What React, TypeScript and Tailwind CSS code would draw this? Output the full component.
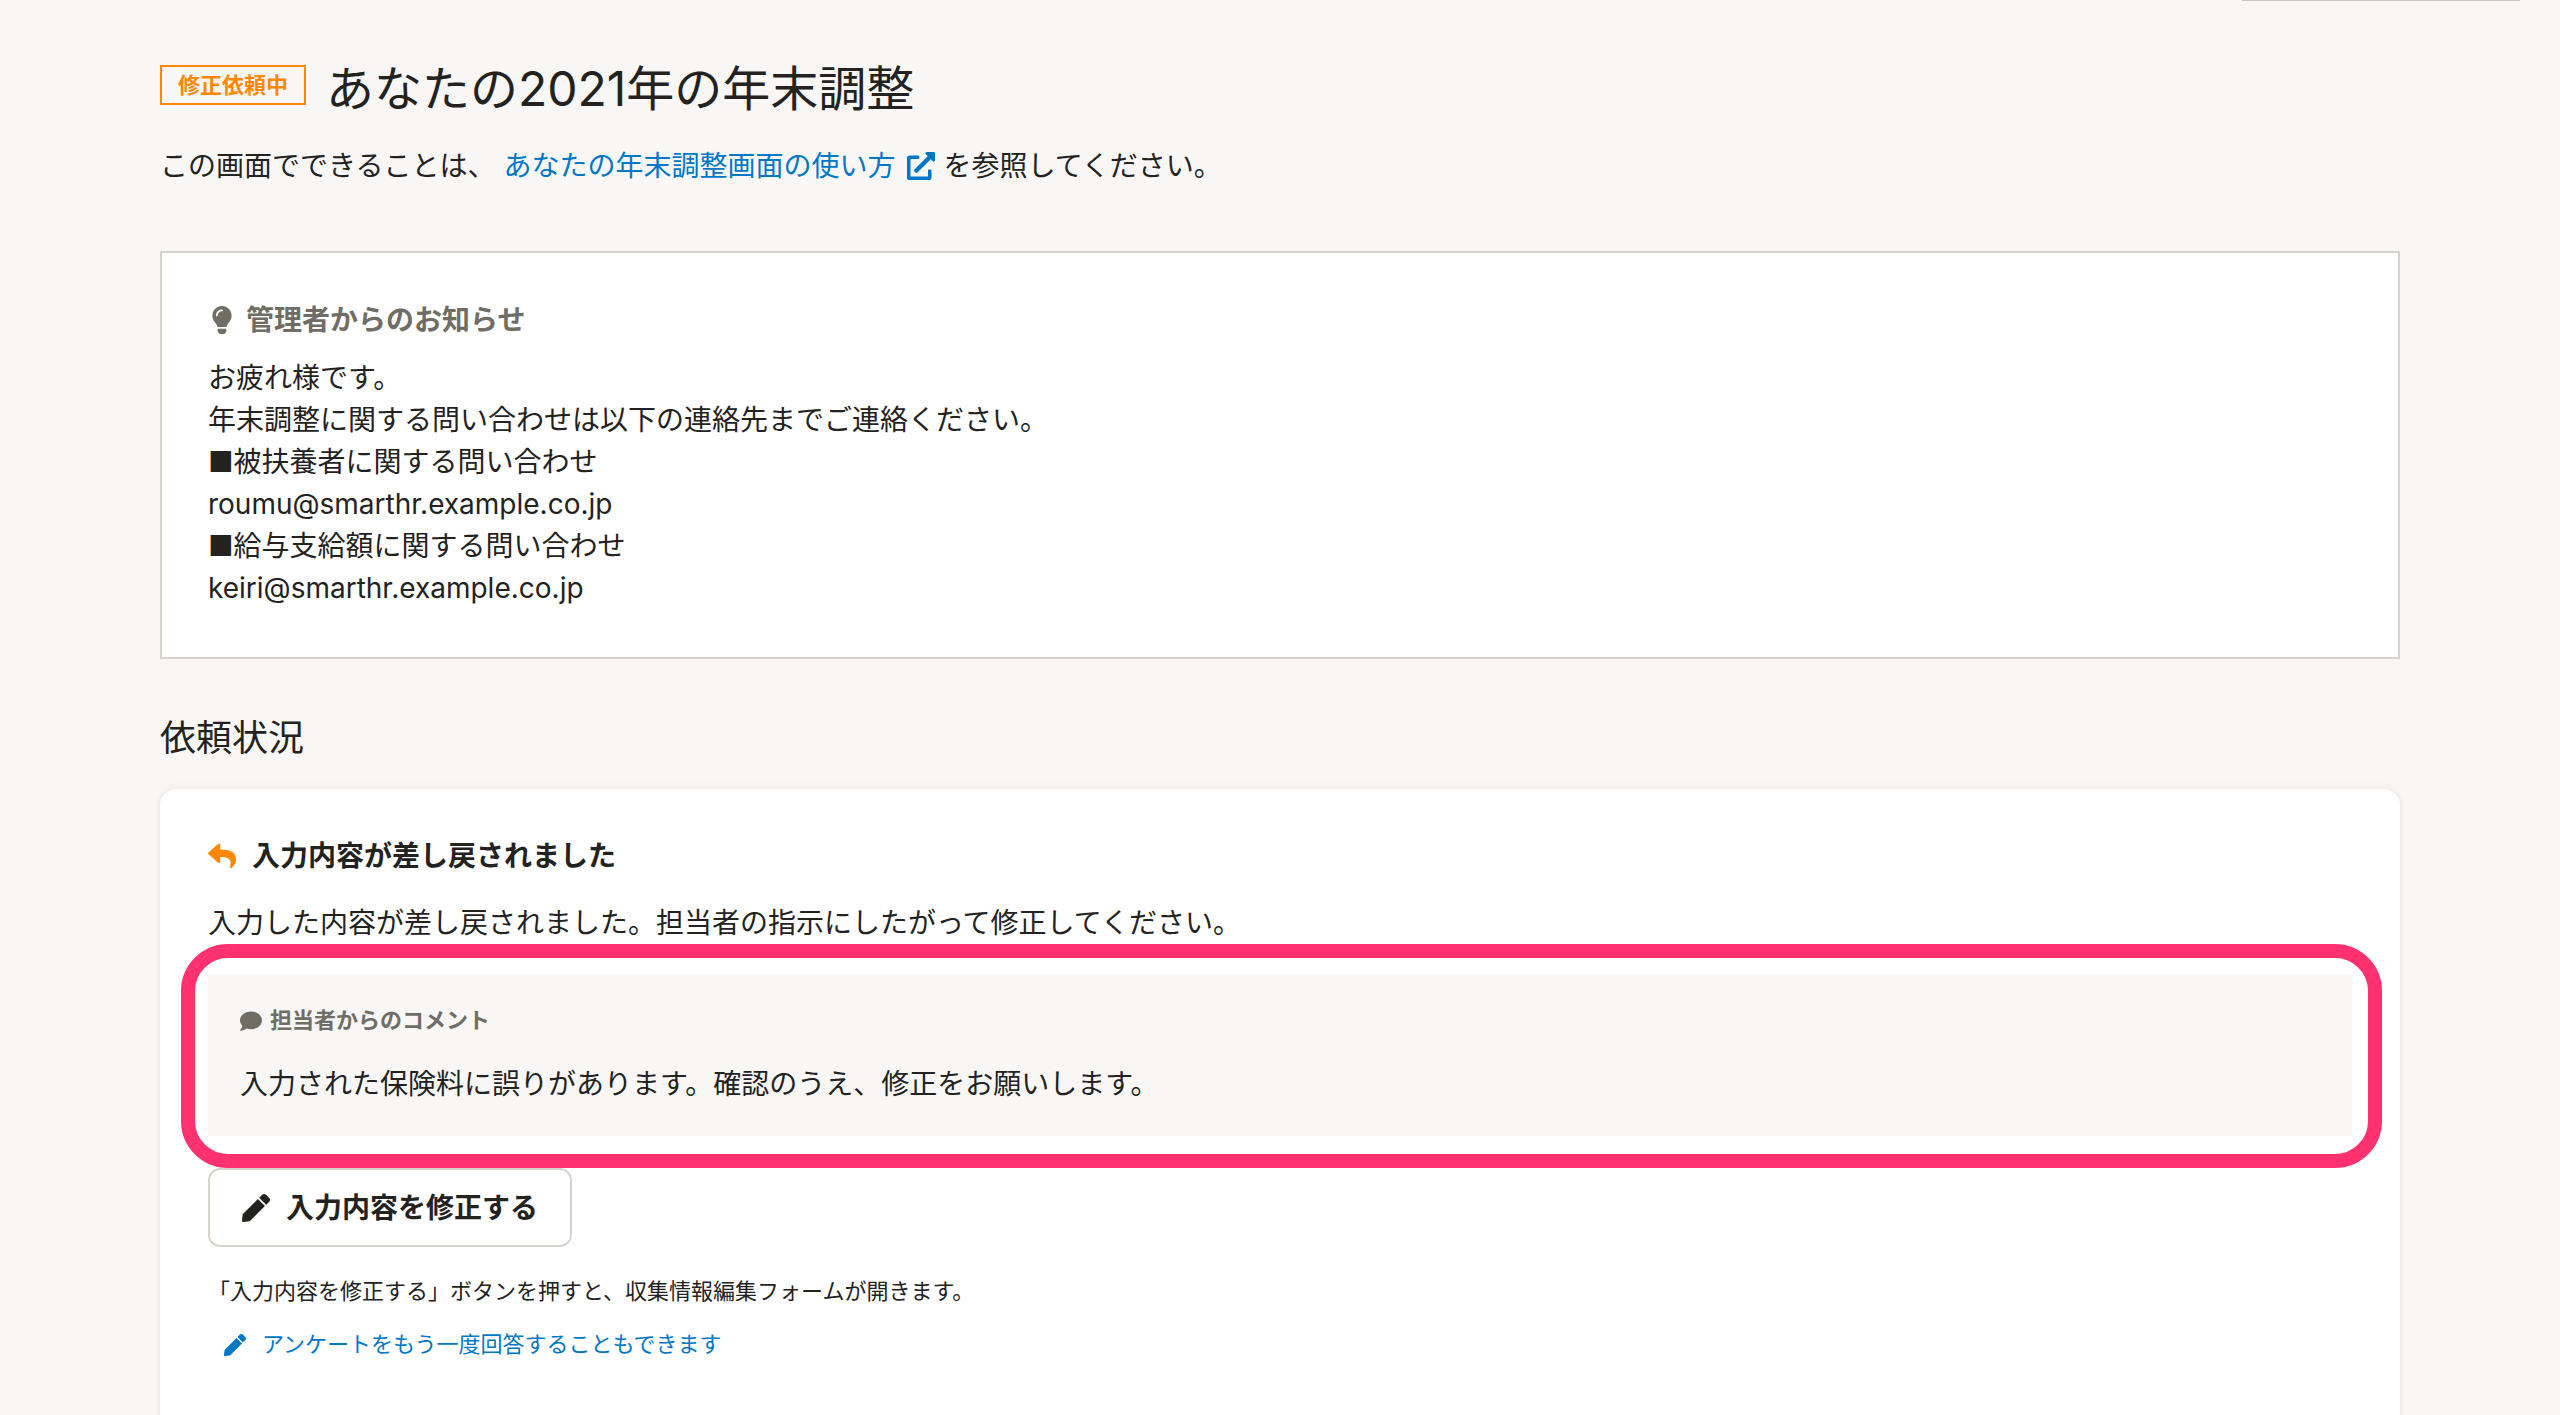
import { FaComment, FaExternalLinkAlt, FaLightbulb, FaPen, FaReply } from "react-icons/fa";

const lines = [
  "お疲れ様です。",
  "年末調整に関する問い合わせは以下の連絡先までご連絡ください。",
  "■被扶養者に関する問い合わせ",
  "roumu@smarthr.example.co.jp",
  "■給与支給額に関する問い合わせ",
  "keiri@smarthr.example.co.jp",
];

export default function App() {
  return (
    <div className="relative h-[1415px] overflow-hidden bg-[#f8f7f6] font-['Inter','Noto_Sans_CJK_JP',sans-serif] text-[#23221e]">
      <div className="absolute right-[40px] top-0 h-[1px] w-[278px] bg-[#c9c6c2]" />

      <div className="px-[160px] pt-[65px]">
        <div className="flex items-start gap-[20px]">
          <span className="flex h-[40px] w-[146px] items-center justify-center border-2 border-[#ff8800] text-[22px] font-bold text-[#ff8800]">
            修正依頼中
          </span>
          <h1 className="text-[48px] leading-[48px] font-normal">あなたの2021年の年末調整</h1>
        </div>

        <p className="mt-[32px] flex items-center text-[28px] leading-[42px]">
          この画面でできることは、
          <a className="ml-[8px] flex items-center gap-[12px] text-[#0077c7]">
            あなたの年末調整画面の使い方
            <FaExternalLinkAlt className="h-[28px] w-[28px]" />
          </a>
          <span className="ml-[8px]">を参照してください。</span>
        </p>

        <section className="mt-[64px] h-[408px] border-2 border-[#d6d3d0] bg-white px-[46px] pt-[46px]">
          <h2 className="flex items-center gap-[14px] text-[28px] leading-[42px] font-bold text-[#706d65]">
            <FaLightbulb className="ml-[4px] h-[28px] w-[20px]" />
            管理者からのお知らせ
          </h2>
          <div className="mt-[16px] text-[28px] leading-[42px]">
            {lines.map((line) => (
              <p key={line}>{line}</p>
            ))}
          </div>
        </section>

        <h2 className="mt-[52px] text-[36px] leading-[54px] font-normal">依頼状況</h2>

        <section className="mt-[24px] rounded-t-[16px] bg-white px-[48px] pt-[46px] pb-[80px] shadow-[0_0_8px_rgba(0,0,0,0.08)]">
          <h3 className="flex items-center gap-[16px] text-[28px] leading-[42px] font-bold">
            <FaReply className="h-[28px] w-[28px] text-[#ff8800]" />
            入力内容が差し戻されました
          </h3>
          <p className="mt-[25px] text-[28px] leading-[42px]">
            入力した内容が差し戻されました。担当者の指示にしたがって修正してください。
          </p>

          <div className="relative mt-[30px] h-[162px] bg-[#f8f7f6] px-[32px] pt-[30px]">
            <div className="absolute inset-[-30px_-30px_-32px_-27px] rounded-[47px] border-[14px] border-[#ff316f]" />
            <h4 className="flex items-center gap-[8px] text-[22px] leading-[33px] font-bold text-[#706d65]">
              <FaComment className="h-[22px] w-[22px]" />
              担当者からのコメント
            </h4>
            <p className="mt-[26px] text-[28px] leading-[42px]">
              入力された保険料に誤りがあります。確認のうえ、修正をお願いします。
            </p>
          </div>

          <button className="mt-[32px] flex h-[79px] w-[364px] items-center gap-[16px] rounded-[12px] border-2 border-[#d6d3d0] bg-white pl-[32px] text-[28px] font-bold">
            <FaPen className="h-[28px] w-[28px]" />
            入力内容を修正する
          </button>

          <p className="mt-[28px] text-[22px] leading-[33px]">
            「入力内容を修正する」ボタンを押すと、収集情報編集フォームが開きます。
          </p>
          <a className="mt-[20px] ml-[16px] flex items-center gap-[16px] text-[22px] leading-[33px] text-[#0077c7]">
            <FaPen className="h-[22px] w-[22px]" />
            アンケートをもう一度回答することもできます
          </a>
        </section>
      </div>
    </div>
  );
}
